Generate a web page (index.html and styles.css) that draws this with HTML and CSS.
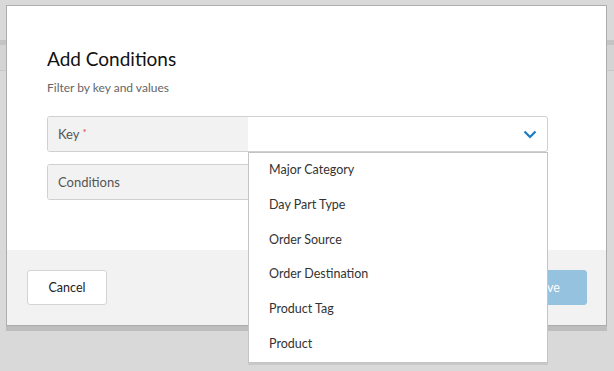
FILE: index.html
```html
<!DOCTYPE html>
<html lang="en">
<head>
  <meta charset="UTF-8" />
  <title>Add Conditions</title>
  <link rel="stylesheet" href="styles.css">
</head>
<body>
  <div class="page-bg">
    <div class="bg-bar"></div>
    <div class="bg-row"></div>
  </div>
  <div class="modal">
    <div class="modal-body">
      <h2 class="modal-title">Add Conditions</h2>
      <p class="modal-sub">Filter by key and values</p>
      <div class="field field-open">
        <div class="field-label">Key<span class="req">*</span></div>
        <div class="field-value">
          <svg class="chevron" width="14" height="9" viewBox="0 0 14 9"><path d="M1.5 1.5 L7 7 L12.5 1.5" fill="none" stroke="#1b7ac4" stroke-width="2.2"/></svg>
        </div>
        <ul class="dropdown">
          <li>Major Category</li>
          <li>Day Part Type</li>
          <li>Order Source</li>
          <li>Order Destination</li>
          <li>Product Tag</li>
          <li>Product</li>
        </ul>
      </div>
      <div class="field">
        <div class="field-label">Conditions</div>
        <div class="field-value"></div>
      </div>
    </div>
    <div class="modal-footer">
      <button class="btn">Cancel</button>
      <button class="btn btn-primary" disabled>Save</button>
    </div>
  </div>
</body>
</html>
```

FILE: styles.css
```css
body { margin: 0; width: 614px; height: 371px; overflow: hidden; background: #d9d9d9; font-family: Lato, "Open Sans", sans-serif; color: #222; position: relative; }
.page-bg { position: absolute; left: 0; right: 0; top: 40px; }
.bg-bar { height: 5px; background: #c4c4c4; }
.bg-row { height: 25px; background: #d4d4d4; border-bottom: 1px solid #c8c8c8; }
.modal { position: relative; margin: 5px 0 0 6px; width: 599px; background: #fff; border: 1px solid #adadad; box-shadow: 0 5px 0 #bdbdbd; }
.modal-body { padding: 40px 58px 50px 40px; }
.modal-title { margin: 0; font-size: 19px; font-weight: 400; line-height: 26px; color: #111; }
.modal-sub { margin: 8px 0 21px; font-size: 12px; color: #666; }
.field { display: grid; grid-template-columns: 200px 1fr; height: 34px; border: 1px solid #d0d0d0; border-radius: 3px; position: relative; margin-bottom: 12px; }
.field:last-child { margin-bottom: 0; }
.field-label { background: #f2f2f2; display: flex; align-items: center; padding-left: 10px; font-size: 13px; color: #555; border-radius: 3px 0 0 3px; }
.field-value { display: flex; align-items: center; justify-content: flex-end; padding-right: 10px; }
.req { color: #e0404a; font-size: 10px; margin-left: 3px; align-self: flex-start; margin-top: 9px; }
.chevron { display: block; }
.dropdown { position: absolute; left: 200px; top: 35px; width: 298px; margin: 0; padding: 0; list-style: none; background: #fff; border: 1px solid #c4c4c4; box-shadow: 0 2px 0 #c8c8c8; z-index: 2; }
.dropdown li { height: 34.8px; line-height: 33px; padding-left: 20px; font-size: 12.5px; color: #333; }
.modal-footer { display: flex; justify-content: space-between; background: #f2f2f2; padding: 20px 19px 20px 20px; }
.btn { width: 80px; height: 35px; border: 1px solid #d4d4d4; border-radius: 3px; background: #fff; font-family: inherit; font-size: 12.5px; color: #222; }
.btn-primary { background: #94c2df; border-color: #94c2df; color: #fff; }
```
